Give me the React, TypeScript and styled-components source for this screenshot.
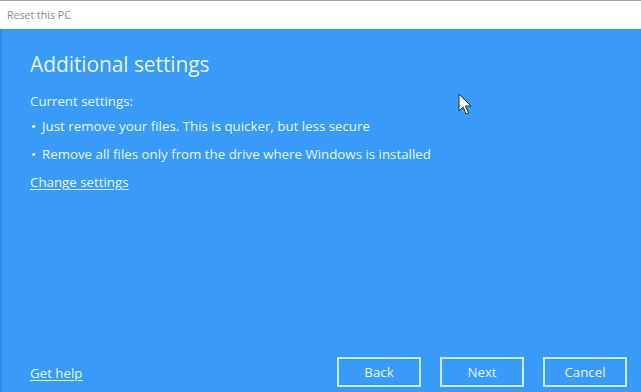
import styled, { createGlobalStyle } from 'styled-components';

const Global = createGlobalStyle`
  html, body {
    margin: 0;
    padding: 0;
    overflow: hidden;
  }
  body {
    font-family: "Open Sans", "Noto Sans", sans-serif;
  }
`;

const S = {
  Window: styled.div`
    width: 641px;
    height: 392px;
    display: flex;
    flex-direction: column;
    background: #3a9af7;
    position: relative;
  `,

  TitleBar: styled.div`
    height: 27px;
    flex: 0 0 auto;
    display: flex;
    align-items: center;
    padding-left: 7px;
    background: #ffffff;
    border-top: 1px solid #a0a0a0;
    border-bottom: 1px solid #f4ecdc;
    font-size: 10.6px;
    color: #8a8a8a;
  `,

  Body: styled.div`
    flex: 1;
    display: flex;
    flex-direction: column;
    justify-content: space-between;
    padding: 21px 14px 5px 28px;
    border-left: 2px solid #2f8ae0;
    color: #ffffff;
  `,

  Content: styled.div`
    display: flex;
    flex-direction: column;
  `,

  Title: styled.h1`
    margin: 0 0 12px 0;
    font-size: 21px;
    font-weight: 400;
    line-height: 28px;
    color: #e6f6ff;
    letter-spacing: -0.1px;
  `,

  Label: styled.div`
    font-size: 13.3px;
    line-height: 22px;
    color: #e8f6ff;
  `,

  Bullet: styled.div`
    display: flex;
    gap: 6px;
    font-size: 13.3px;
    line-height: 28px;
    color: #e8f6ff;
    &::before {
      content: '•';
      padding-left: 1px;
    }
  `,

  Link: styled.a<{ $offset?: number }>`
    font-size: 13.3px;
    line-height: 28px;
    padding-top: ${({ $offset }) => $offset ?? 0}px;
    color: #e8f6ff;
    text-decoration: underline;
    text-underline-offset: 2px;
    align-self: flex-start;
    cursor: pointer;
  `,

  Footer: styled.div`
    display: flex;
    align-items: center;
    justify-content: space-between;
  `,

  Buttons: styled.div`
    display: flex;
    gap: 19px;
  `,

  Button: styled.button`
    width: 84px;
    height: 30px;
    box-sizing: border-box;
    background: transparent;
    border: 2px solid #cdeeff;
    color: #e8f6ff;
    font-family: inherit;
    font-size: 13.3px;
    padding: 0;
  `,

  Cursor: styled.svg`
    position: absolute;
    left: 458px;
    top: 93px;
  `,
};

const App = () => (
  <>
    <Global />
    <S.Window>
      <S.TitleBar>Reset this PC</S.TitleBar>
      <S.Body>
        <S.Content>
          <S.Title>Additional settings</S.Title>
          <S.Label>Current settings:</S.Label>
          <S.Bullet>Just remove your files. This is quicker, but less secure</S.Bullet>
          <S.Bullet>Remove all files only from the drive where Windows is installed</S.Bullet>
          <S.Link>Change settings</S.Link>
        </S.Content>
        <S.Footer>
          <S.Link $offset={3}>Get help</S.Link>
          <S.Buttons>
            <S.Button>Back</S.Button>
            <S.Button>Next</S.Button>
            <S.Button>Cancel</S.Button>
          </S.Buttons>
        </S.Footer>
      </S.Body>
      <S.Cursor width="14" height="24" viewBox="0 0 14 24">
        <path d="M1 1 L1 18 L5 14 L8 21 L10.5 20 L7.5 13 L13 13 Z" fill="#ffffff" stroke="#1a2a3a" strokeWidth="1" strokeLinejoin="round" />
      </S.Cursor>
    </S.Window>
  </>
);

export default App;
